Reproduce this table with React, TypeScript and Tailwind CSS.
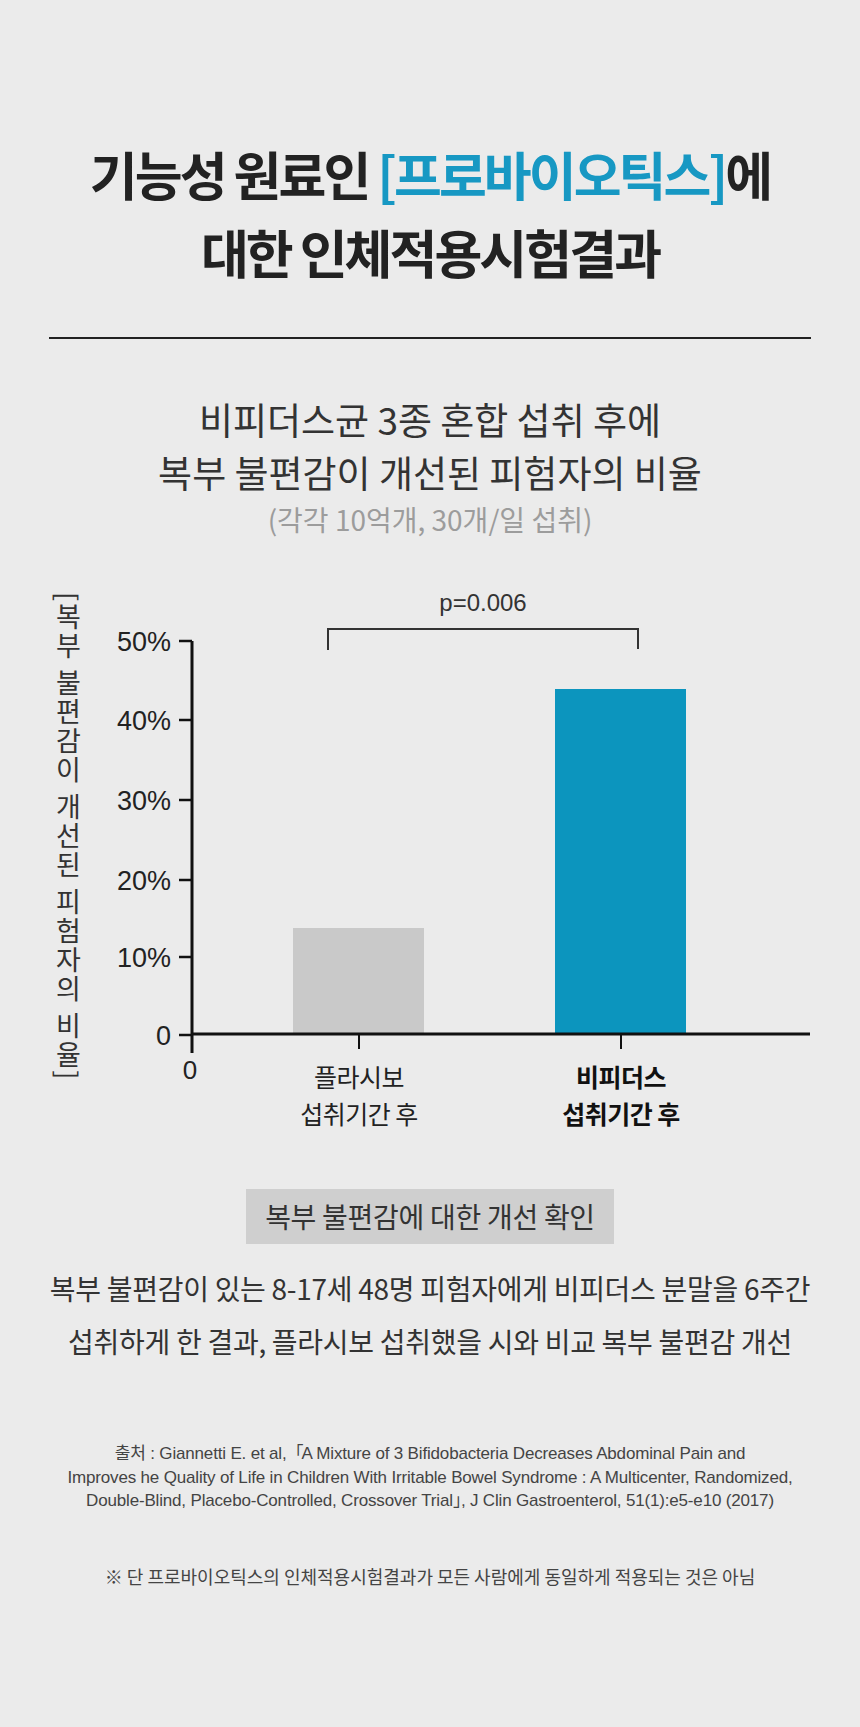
import React from "react";

const LATIN = "'Liberation Sans', 'Noto Sans CJK KR', sans-serif";

const ticks = [
  { label: "50%", y: 57 },
  { label: "40%", y: 136 },
  { label: "30%", y: 216 },
  { label: "20%", y: 296 },
  { label: "10%", y: 373 },
  { label: "0", y: 451 },
];

const BarChart = () => {
  return (
    <svg width="730" height="474" viewBox="0 0 730 474" className="block overflow-visible">
      {/* p value + bracket */}
      <text x="393" y="27" textAnchor="middle" fontSize="24" fill="#333" fontFamily={LATIN}>
        p=0.006
      </text>
      <path d="M238 66 V45 H548 V65" fill="none" stroke="#333" strokeWidth="2" />

      {/* bars */}
      <rect x="203" y="344" width="131" height="106" fill="#c9c9c9" />
      <rect x="465" y="105" width="131" height="345" fill="#0c95be" />

      {/* axes */}
      <line x1="102" y1="57" x2="102" y2="469" stroke="#111" strokeWidth="3" />
      <line x1="101" y1="450" x2="720" y2="450" stroke="#111" strokeWidth="3" />
      {ticks.map((t) => (
        <g key={t.label}>
          <line x1="89" y1={t.y} x2="102" y2={t.y} stroke="#111" strokeWidth="2.5" />
          <text x="81" y={t.y + 10} textAnchor="end" fontSize="27" fill="#222" fontFamily={LATIN}>
            {t.label}
          </text>
        </g>
      ))}
      <line x1="269" y1="450" x2="269" y2="465" stroke="#111" strokeWidth="2" />
      <line x1="531" y1="450" x2="531" y2="465" stroke="#111" strokeWidth="2" />
      <text x="100" y="495" textAnchor="middle" fontSize="26" fill="#222" fontFamily={LATIN}>
        0
      </text>
    </svg>
  );
};

export default function App() {
  return (
    <div className="w-[860px] min-h-[1727px] bg-[#ebebeb] text-[#333] pb-[130px] font-['Noto_Sans_CJK_KR','Noto_Sans',sans-serif]">
      {/* title */}
      <div className="pt-[135px] text-center text-[52px] leading-[78px] font-bold tracking-[-0.056em] text-[#222]">
        기능성 원료인 <span className="text-[#1798c3]">[프로바이오틱스]</span>에
        <br />
        대한 인체적용시험결과
      </div>

      <div className="mx-[49px] mt-[46px] h-[2px] bg-[#222]" />

      {/* subtitle */}
      <div className="mt-[54px] text-center">
        <div className="text-[37px] leading-[53px] text-[#333]">
          비피더스균 3종 혼합 섭취 후에
          <br />
          복부 불편감이 개선된 피험자의 비율
        </div>
        <div className="mt-[2px] text-[28px] leading-[36px] text-[#9c9c9c]">
          (각각 10억개, 30개/일 섭취)
        </div>
      </div>

      {/* chart */}
      <div className="mt-[47px] flex pl-[55px]">
        <div className="mt-[8px] h-fit text-[27px] leading-[27px] tracking-[2px] text-[#333] [writing-mode:vertical-rl]">
          [복부 불편감이 개선된 피험자의 비율]
        </div>
        <div className="ml-[8px] flex flex-col">
          <BarChart />
          <div className="flex pl-[169px] gap-[62px] text-[25px] leading-[37px] tracking-[-0.5px] text-center">
            <div className="w-[200px] text-[#222]">
              플라시보
              <br />
              섭취기간 후
            </div>
            <div className="w-[200px] font-bold text-[#111]">
              비피더스
              <br />
              섭취기간 후
            </div>
          </div>
        </div>
      </div>

      {/* summary */}
      <div className="mt-[57px] flex justify-center">
        <div className="h-[55px] px-[19px] bg-[#cfcfcf] text-[28px] leading-[55px] tracking-[-0.01em] text-[#333]">
          복부 불편감에 대한 개선 확인
        </div>
      </div>

      <p className="mt-[18px] text-center text-[28px] leading-[53px] tracking-[-0.01em] text-[#333]">
        복부 불편감이 있는 8-17세 48명 피험자에게 비피더스 분말을 6주간
        <br />
        섭취하게 한 결과, 플라시보 섭취했을 시와 비교 복부 불편감 개선
      </p>

      {/* source */}
      <p className="mt-[74px] text-center text-[17px] leading-[23.5px] tracking-[-0.01em] text-[#444] font-['Liberation_Sans','Noto_Sans_CJK_KR',sans-serif]">
        출처 : Giannetti E. et al,<span className="tracking-[-2px]">「</span>A Mixture of 3 Bifidobacteria Decreases
        Abdominal Pain and
        <br />
        Improves he Quality of Life in Children With Irritable Bowel Syndrome : A Multicenter, Randomized,
        <br />
        Double-Blind, Placebo-Controlled, Crossover Trial<span className="tracking-[-9px]">」</span>, J Clin
        Gastroenterol, 51(1):e5-e10 (2017)
      </p>

      <p className="mt-[51px] text-center text-[18px] leading-[24px] text-[#444]">
        ※ 단 프로바이오틱스의 인체적용시험결과가 모든 사람에게 동일하게 적용되는 것은 아님
      </p>
    </div>
  );
}
